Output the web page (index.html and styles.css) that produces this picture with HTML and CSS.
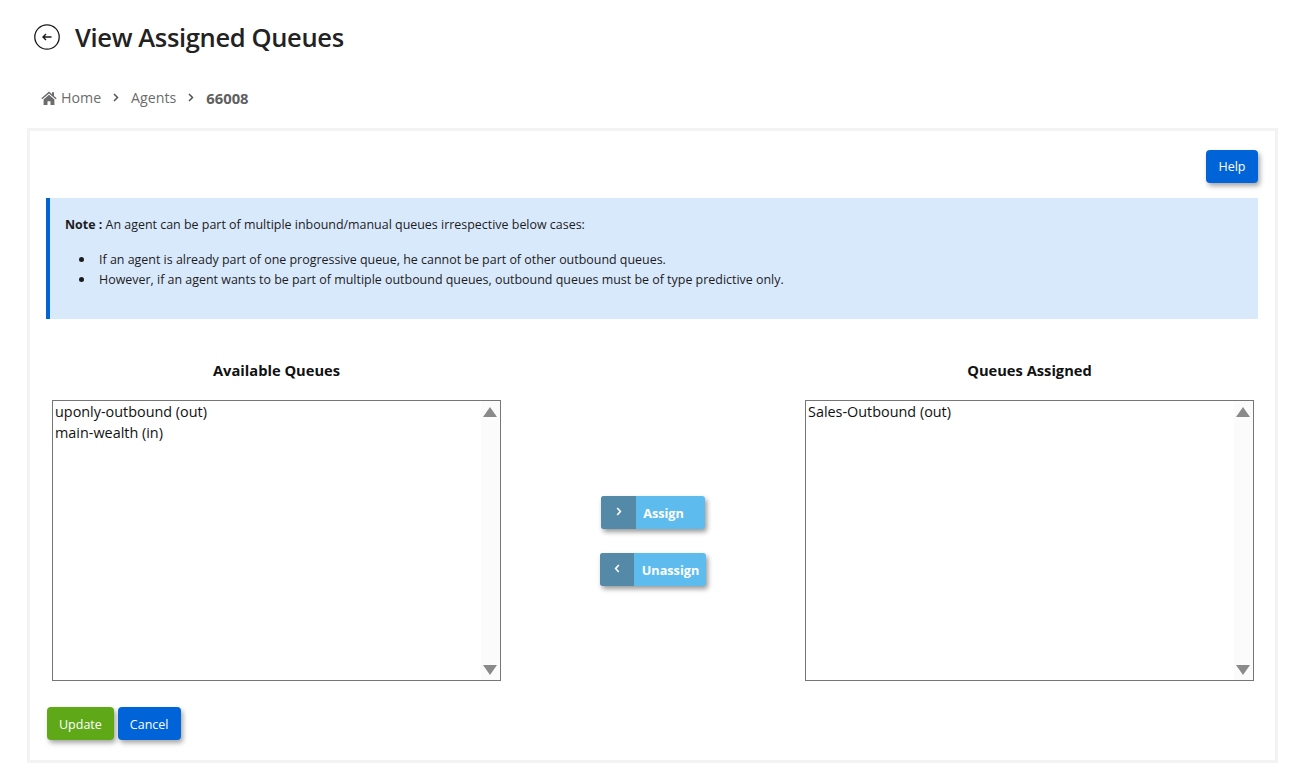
FILE: index.html
```html
<!DOCTYPE html>
<html lang="en">
<head>
    <meta charset="UTF-8">
    <title>View Assigned Queues</title>
    <link rel="stylesheet" href="styles.css">
</head>
<body>
    <header class="page-title">
        <svg class="back-icon" width="26" height="26" viewBox="0 0 26 26">
            <circle cx="13" cy="13" r="12.2" fill="none" stroke="#1a1a1a" stroke-width="1.3"/>
            <path d="M17.5 13H9M12 10l-3 3 3 3" fill="none" stroke="#1a1a1a" stroke-width="1.4"/>
        </svg>
        <h1>View Assigned Queues</h1>
    </header>

    <nav class="breadcrumb">
        <svg class="home-icon" width="16" height="14" viewBox="0 0 16 14">
            <path d="M8 0.5 0.3 7.2l1 1.1L8 2.6l6.7 5.7 1-1.1L13 4.9V1.2h-2v2L8 .5z" fill="#6c6c6c"/>
            <path d="M8 3.8 2.6 8.4V14h3.9v-3.8h3V14h3.9V8.4z" fill="#6c6c6c"/>
        </svg>
        <span class="crumb">Home</span>
        <svg class="sep" width="6" height="9" viewBox="0 0 6 9"><path d="M1 1l3.5 3.5L1 8" fill="none" stroke="#555" stroke-width="1.5"/></svg>
        <span class="crumb">Agents</span>
        <svg class="sep" width="6" height="9" viewBox="0 0 6 9"><path d="M1 1l3.5 3.5L1 8" fill="none" stroke="#555" stroke-width="1.5"/></svg>
        <span class="crumb current">66008</span>
    </nav>

    <main class="card">
        <div class="help-row">
            <button class="btn btn-blue btn-help">Help</button>
        </div>

        <div class="note">
            <p><b>Note :</b> An agent can be part of multiple inbound/manual queues irrespective below cases:</p>
            <ul>
                <li>If an agent is already part of one progressive queue, he cannot be part of other outbound queues.</li>
                <li>However, if an agent wants to be part of multiple outbound queues, outbound queues must be of type predictive only.</li>
            </ul>
        </div>

        <div class="queues">
            <section class="queue-col">
                <h3>Available Queues</h3>
                <div class="listbox">
                    <div class="options">
                        <div>uponly-outbound (out)</div>
                        <div>main-wealth (in)</div>
                    </div>
                    <div class="scrollbar"><i class="arrow up"></i><i class="arrow down"></i></div>
                </div>
            </section>

            <div class="move-buttons">
                <button class="move-btn assign">
                    <span class="move-ico"><svg width="6" height="9" viewBox="0 0 6 9"><path d="M1.2 1l3.2 3.5L1.2 8" fill="none" stroke="#fff" stroke-width="1.6"/></svg></span>
                    <span class="move-txt">Assign</span>
                </button>
                <button class="move-btn unassign">
                    <span class="move-ico"><svg width="6" height="9" viewBox="0 0 6 9"><path d="M4.8 1L1.6 4.5l3.2 3.5" fill="none" stroke="#fff" stroke-width="1.6"/></svg></span>
                    <span class="move-txt">Unassign</span>
                </button>
            </div>

            <section class="queue-col">
                <h3>Queues Assigned</h3>
                <div class="listbox">
                    <div class="options">
                        <div>Sales-Outbound (out)</div>
                    </div>
                    <div class="scrollbar"><i class="arrow up"></i><i class="arrow down"></i></div>
                </div>
            </section>
        </div>

        <div class="actions">
            <button class="btn btn-green">Update</button>
            <button class="btn btn-blue">Cancel</button>
        </div>
    </main>
</body>
</html>
```

FILE: styles.css
```css
* {
    box-sizing: border-box;
}

body {
    margin: 0;
    padding: 0 24px 0 27px;
    height: 778px;
    overflow: hidden;
    background: #fff;
    font-family: "Open Sans", Arial, sans-serif;
    color: #212121;
}

.page-title {
    display: flex;
    align-items: center;
    gap: 15px;
    height: 75px;
    padding: 0 0 1px 7px;
}

.page-title h1 {
    margin: 0;
    font-size: 25.5px;
    font-weight: 600;
    letter-spacing: -0.35px;
    color: #222;
}

.back-icon {
    flex: none;
}

.breadcrumb {
    display: flex;
    align-items: center;
    height: 53px;
    padding: 0 0 8px 14px;
    font-size: 14px;
    color: #6c6c6c;
}

.home-icon {
    margin-right: 4px;
}

.sep {
    margin: 0 12px;
}

.crumb {
    font-size: 14.2px;
}

.crumb.current {
    font-size: 14.8px;
    font-weight: 700;
    color: #5f5f5f;
}

.card {
    height: 635px;
    padding: 19px 17px 0 16px;
    border: 3px solid #f3f3f3;
}

.help-row {
    display: flex;
    justify-content: flex-end;
    height: 48px;
}

.btn {
    height: 33px;
    padding: 0 12px;
    border: none;
    border-radius: 4px;
    font-family: inherit;
    font-size: 12.5px;
    color: #fff;
    box-shadow: 2px 3px 5px rgba(0, 0, 0, 0.35);
}

.btn-help {
    width: 52px;
    padding: 0;
}

.btn-blue {
    background: #0064d8;
}

.btn-green {
    background: #5fa919;
}

.note {
    height: 121px;
    padding: 17px 16px 0 15px;
    border-left: 4px solid #0064d8;
    background: #d9e9fc;
    font-size: 12.45px;
    color: #1c1c1c;
}

.note p {
    margin: 0 0 15px;
    line-height: 20px;
}

.note ul {
    margin: 0;
    padding-left: 34px;
    list-style: none;
}

.note li {
    line-height: 20px;
}

.note li::before {
    content: "";
    display: inline-block;
    width: 5px;
    height: 5px;
    margin: 0 15px 2px -20px;
    border-radius: 50%;
    background: #1c1c1c;
}

.queues {
    display: grid;
    grid-template-columns: 449px 1fr 449px;
    padding: 0 4px 0 6px;
    margin-top: 41px;
}

.queue-col h3 {
    margin: 0;
    height: 40px;
    line-height: 21px;
    font-size: 14.7px;
    font-weight: 700;
    text-align: center;
    color: #111;
}

.listbox {
    display: flex;
    height: 281px;
    border: 1px solid #767676;
    font-size: 14.4px;
    color: #111;
}

.options {
    flex: 1;
    padding: 0 2px;
    line-height: 21px;
}

.scrollbar {
    display: flex;
    flex-direction: column;
    justify-content: space-between;
    align-items: center;
    width: 19px;
    padding: 6px 1px 5px 0;
    background: #fbfbfb;
}

.arrow {
    width: 0;
    height: 0;
    border-left: 7px solid transparent;
    border-right: 7px solid transparent;
}

.arrow.up {
    border-bottom: 10px solid #8a8a8a;
}

.arrow.down {
    border-top: 10px solid #8a8a8a;
}

.move-buttons {
    display: flex;
    flex-direction: column;
    align-items: center;
    gap: 24px;
    padding-top: 136px;
}

.move-btn {
    display: flex;
    height: 33px;
    padding: 0;
    border: none;
    border-radius: 3px;
    overflow: hidden;
    background: #5ebbee;
    font-family: inherit;
    color: #fff;
    box-shadow: 2px 3px 5px rgba(0, 0, 0, 0.4);
}

.move-ico {
    display: flex;
    align-items: center;
    justify-content: center;
    width: 35px;
    height: 100%;
    padding-bottom: 2px;
    background: #5589a8;
}

.move-txt {
    padding: 0 21px 0 7px;
    line-height: 35px;
    font-size: 12.7px;
    font-weight: 700;
}

.move-btn.unassign .move-ico {
    width: 34px;
}

.move-btn.unassign .move-txt {
    padding: 0 7px 0 8px;
}

.actions {
    display: flex;
    gap: 4px;
    margin: 26px 0 0 1px;
}

.actions .btn {
    padding-top: 1px;
}
```
